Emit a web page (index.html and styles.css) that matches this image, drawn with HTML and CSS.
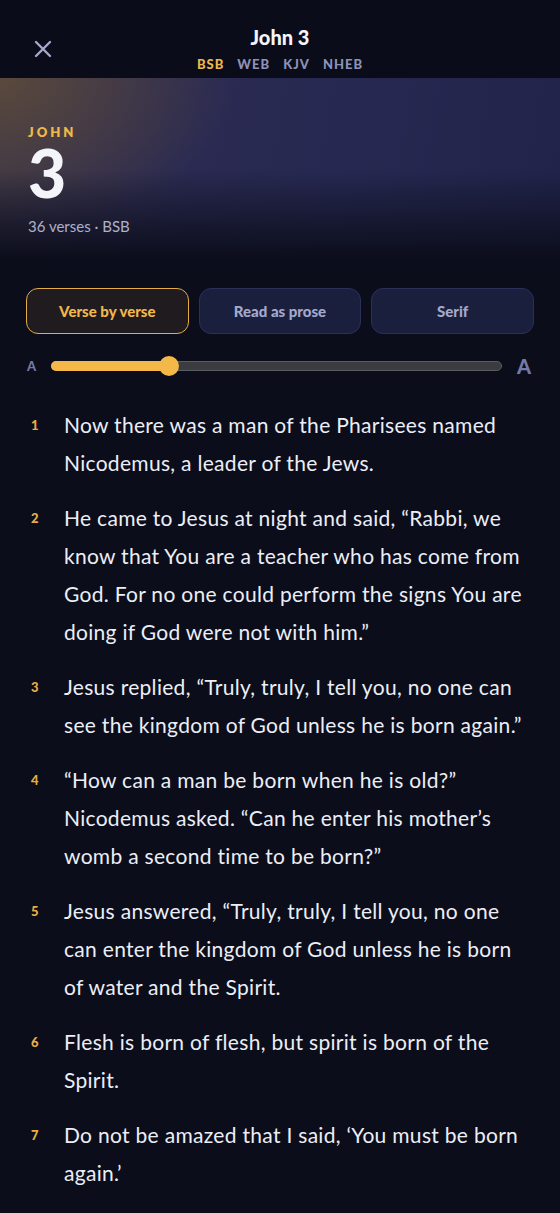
FILE: index.html
```html
<!DOCTYPE html>
<html>
<head>
  <meta charset="UTF-8">
  <title>John 3</title>
  <meta name="viewport" content="width=device-width, initial-scale=1">
  <link rel="stylesheet" href="styles.css">
</head>
<body>
  <div class="topbar">
    <button class="close" aria-label="Close">
      <svg width="18" height="18" viewBox="0 0 18 18"><path d="M2 2 L16 16 M16 2 L2 16" stroke="#a3a8cc" stroke-width="2.4" stroke-linecap="round" fill="none"/></svg>
    </button>
    <div class="title">John 3</div>
    <div class="versions">
      <span class="on">BSB</span>
      <span>WEB</span>
      <span>KJV</span>
      <span>NHEB</span>
    </div>
  </div>

  <div class="hero">
    <div class="book">JOHN</div>
    <div class="chapter">3</div>
    <div class="meta">36 verses · BSB</div>
  </div>

  <div class="controls">
    <div class="modes">
      <button class="mode on">Verse by verse</button>
      <button class="mode">Read as prose</button>
      <button class="mode">Serif</button>
    </div>
    <div class="sizer">
      <span class="a-small">A</span>
      <div class="track">
        <div class="fill" style="width: 26%"></div>
        <div class="thumb" style="left: 26%"></div>
      </div>
      <span class="a-big">A</span>
    </div>
  </div>

  <ol class="verses">
    <li><span class="num">1</span><p>Now there was a man of the Pharisees named Nicodemus, a leader of the Jews.</p></li>
    <li><span class="num">2</span><p>He came to Jesus at night and said, “Rabbi, we know that You are a teacher who has come from God. For no one could perform the signs You are doing if God were not with him.”</p></li>
    <li><span class="num">3</span><p>Jesus replied, “Truly, truly, I tell you, no one can see the kingdom of God unless he is born again.”</p></li>
    <li><span class="num">4</span><p>“How can a man be born when he is old?” Nicodemus asked. “Can he enter his mother’s womb a second time to be born?”</p></li>
    <li><span class="num">5</span><p>Jesus answered, “Truly, truly, I tell you, no one can enter the kingdom of God unless he is born of water and the Spirit.</p></li>
    <li><span class="num">6</span><p>Flesh is born of flesh, but spirit is born of the Spirit.</p></li>
    <li><span class="num">7</span><p>Do not be amazed that I said, ‘You must be born again.’</p></li>
  </ol>
</body>
</html>
```

FILE: styles.css
```css
body {
  margin: 0;
  background: #0b0d1b;
  color: #eceef6;
  font-family: Lato, "Noto Sans", sans-serif;
  overflow: hidden;
}
button { font-family: inherit; cursor: pointer; }

.topbar {
  position: relative;
  height: 78px;
  background: #0a0c1a;
  text-align: center;
  box-sizing: border-box;
  padding-top: 25px;
}
.close {
  position: absolute;
  left: 33px;
  top: 40px;
  background: none;
  border: 0;
  padding: 0;
  width: 20px;
  height: 20px;
}
.title { font-size: 20px; font-weight: 900; color: #f4f5fa; line-height: 24px; }
.versions {
  margin-top: 7px;
  display: flex;
  justify-content: center;
  gap: 13px;
  font-size: 13px;
  font-weight: 900;
  letter-spacing: 1px;
  color: #8d92b8;
}
.versions .on { color: #f0b84a; }

.hero {
  height: 182px;
  box-sizing: border-box;
  padding: 46px 28px 0;
  background:
    linear-gradient(to bottom, rgba(11,13,27,0) 50%, #0b0d1b 100%),
    radial-gradient(ellipse 240px 150px at 0% 0%, rgba(110,86,52,0.6), rgba(110,86,52,0) 100%),
    linear-gradient(100deg, #3a3448 0%, #2a2a52 35%, #262851 65%, #21234a 100%);
}
.book {
  font-size: 13px;
  font-weight: 800;
  letter-spacing: 3px;
  color: #f0b84a;
  line-height: 16px;
}
.chapter {
  font-size: 66px;
  font-weight: 900;
  line-height: 66px;
  color: #f4f5fa;
}
.meta {
  margin-top: 11px;
  font-size: 15px;
  color: #aeb1cc;
}

.controls { padding: 28px 26px 0; }
.modes {
  display: grid;
  grid-template-columns: 1fr 1fr 1fr;
  gap: 10px;
}
.mode {
  height: 46px;
  border-radius: 12px;
  border: 1px solid #2b305a;
  background: #1b1f3e;
  color: #a4a9cc;
  font-size: 15px;
  font-weight: 900;
}
.mode.on {
  border-color: #e3ac45;
  background: #1f1b1e;
  color: #f0b84a;
}

.sizer {
  display: flex;
  align-items: center;
  gap: 15px;
  margin-top: 20px;
  height: 24px;
}
.a-small { font-size: 13px; font-weight: 900; color: #747aa8; margin-left: 1px; }
.a-big { font-size: 20px; font-weight: 900; color: #747aa8; margin-right: 3px; }
.track {
  position: relative;
  flex: 1;
  height: 10px;
  border-radius: 5px;
  background: #3a3c40;
  border: 1px solid #5a5c62;
  box-sizing: border-box;
}
.fill {
  position: absolute;
  left: -1px;
  top: -1px;
  height: 10px;
  border-radius: 5px;
  background: #f3b847;
}
.thumb {
  position: absolute;
  top: 50%;
  width: 20px;
  height: 20px;
  border-radius: 50%;
  background: #f3b847;
  transform: translate(-50%, -50%);
}

.verses {
  list-style: none;
  margin: 0;
  padding: 28px 28px 0 26px;
}
.verses li {
  display: flex;
  margin-bottom: 17px;
}
.num {
  width: 38px;
  flex: none;
  font-size: 13px;
  font-weight: 900;
  color: #e9ad44;
  line-height: 38px;
  padding-left: 5px;
  box-sizing: border-box;
}
.verses p {
  margin: 0;
  font-size: 21px;
  letter-spacing: 0.3px;
  line-height: 38px;
  color: #eceef6;
}
```
